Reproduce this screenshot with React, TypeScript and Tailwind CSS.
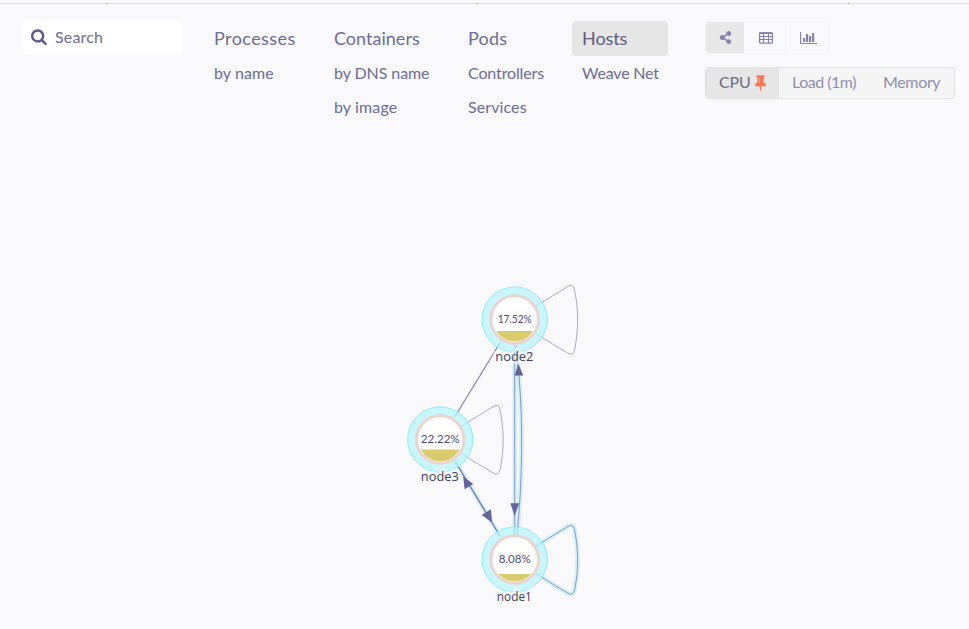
import React from "react";
import { FaShareAlt } from "react-icons/fa";

const topologies = [
  { name: "Processes", subs: [{ name: "by name", spacing: "tracking-[0.07px]" }], box: "w-[120px]", title: "tracking-[0.42px]" },
  {
    name: "Containers",
    subs: [
      { name: "by DNS name", spacing: "tracking-[-0.08px]" },
      { name: "by image", spacing: "tracking-[0.12px]" },
    ],
    box: "w-[134px]",
    title: "tracking-[0.02px]",
  },
  {
    name: "Pods",
    subs: [
      { name: "Controllers", spacing: "tracking-[-0.13px]" },
      { name: "Services", spacing: "tracking-[0.1px]" },
    ],
    box: "w-[114px]",
    title: "tracking-[0.2px]",
  },
  { name: "Hosts", subs: [{ name: "Weave Net", spacing: "tracking-[-0.2px]" }], box: "w-[96px]", title: "tracking-[-0.08px]", active: true },
];

const nodes = [
  { id: "node2", x: 514.7, y: 319.5, value: "17.52%", fill: 331, labelWidth: 38, valueWidth: 34, lit: false },
  { id: "node3", x: 440.2, y: 439.5, value: "22.22%", fill: 449.5, labelWidth: 38, valueWidth: 39, lit: false },
  { id: "node1", x: 514.7, y: 559.5, value: "8.08%", fill: 574, labelWidth: 35, valueWidth: 32, lit: true },
];

function loopPath(x: number, y: number) {
  return `M${x + 21} ${y - 13} C${x + 35} ${y - 22} ${x + 45} ${y - 28} ${x + 54} ${y - 33.5} Q${x + 58.5} ${y - 35.5} ${x + 59.5} ${y - 31} C${x + 64} ${y - 11} ${x + 64} ${y + 10} ${x + 60} ${y + 30} Q${x + 58.5} ${y + 37} ${x + 53} ${y + 33.5} C${x + 44} ${y + 28} ${x + 35} ${y + 23} ${x + 21} ${y + 14}`;
}

function SearchIcon() {
  return (
    <svg className="mb-[3px] size-[17px]" viewBox="0 0 1792 1792" fill="#5b5b8e">
      <path d="M1152 832q0-185-131.5-316.5t-316.5-131.5-316.5 131.5-131.5 316.5 131.5 316.5 316.5 131.5 316.5-131.5 131.5-316.5zm512 832q0 52-38 90t-90 38q-54 0-90-38l-343-342q-179 124-399 124-143 0-273.5-55.5t-225-150-150-225-55.5-273.5 55.5-273.5 150-225 225-150 273.5-55.5 273.5 55.5 225 150 150 225 55.5 273.5q0 220-124 399l343 343q37 37 37 90z" />
    </svg>
  );
}

function PinIcon() {
  return (
    <svg className="mb-px ml-px size-[17px]" viewBox="0 0 1792 1792" fill="#ff7550">
      <path d="M800 864v-448q0-14-9-23t-23-9-23 9-9 23v448q0 14 9 23t23 9 23-9 9-23zm672 352q0 26-19 45t-45 19h-429l-51 483q-2 12-10.500 20.500t-20.500 8.500h-1q-27 0-32-27l-76-485h-404q-26 0-45-19t-19-45q0-123 78.500-221.500t177.500-98.500v-512q-52 0-90-38t-38-90 38-90 90-38h640q52 0 90 38t38 90-38 90-90 38v512q99 0 177.500 98.500t78.500 221.500z" />
    </svg>
  );
}

function TableIcon() {
  return (
    <svg className="ml-[3px]" width="14" height="12" viewBox="0 0 14 12" fill="none" stroke="#8383ac">
      <rect x="0.6" y="0.9" width="12.8" height="10.3" rx="0.6" strokeWidth="1.2" />
      <path d="M0.5 1.2H13.5" strokeWidth="1.7" />
      <path d="M1 4.5H13M1 7.5H13M4.5 1V11M9.5 1V11" strokeWidth="1.1" />
    </svg>
  );
}

function ChartIcon() {
  return (
    <svg className="mt-[2px] ml-[2px]" width="17" height="13" viewBox="0 0 17 13" fill="#8383ac">
      <path d="M0 0H1.2V11H17V12.100H0ZM3 6H5.200V10H3ZM6 2H8.200V10H6ZM9 4H11.200V10H9ZM12 1H14.200V10H12Z" />
    </svg>
  );
}

function Graph() {
  const straight = "M455 461L500 536";
  const down = "M514.7 345V534";
  const curved = "M516 345C518 363 520.5 390 521.3 418C522.4 460 520.5 502 517 534";
  return (
    <svg className="block h-[499px] w-full" viewBox="0 130 969 499">
      <g fill="none" stroke="#b5e9f6" strokeWidth="5" opacity="0.5">
        <path d={straight} />
        <path d={down} />
        <path d={curved} />
        <path d={loopPath(514.7, 559.5)} />
      </g>
      <g fill="none" stroke="#666699">
        <path d="M500.5 342L455 416.5" strokeWidth="1.1" opacity="0.85" />
        <path d={straight} strokeWidth="1.3" opacity="0.9" />
        <path d={down} strokeWidth="1" opacity="0.65" />
        <path d={curved} strokeWidth="1" opacity="0.65" />
        {nodes.map((n) => (
          <path key={n.id} d={loopPath(n.x, n.y)} stroke={n.lit ? "#60759f" : "#79739f"} opacity={n.lit ? 0.7 : 0.6} />
        ))}
      </g>
      {nodes.map((n) => (
        <g key={n.id}>
          <circle cx={n.x} cy={n.y} r="32.6" fill="#b8f3ff" fillOpacity="0.74" stroke="#8cebfa" strokeWidth="1" />
          <circle cx={n.x} cy={n.y} r="23.8" fill="#fff" stroke="#ecd2ca" strokeWidth="2.8" />
          <clipPath id={`clip-${n.id}`}>
            <rect x={n.x - 25} y={n.fill} width="50" height="40" />
          </clipPath>
          <circle cx={n.x} cy={n.y} r="21.8" fill="#dacb6b" clipPath={`url(#clip-${n.id})`} />
          <text x={n.x} y={n.y + 3.7} textAnchor="middle" textLength={n.valueWidth} lengthAdjust="spacingAndGlyphs" className="fill-[#4c4a83] font-['Lato','Open_Sans',sans-serif] text-[11.5px]">
            {n.value}
          </text>
          <text x={n.x - 0.4} y={n.y + 41.2} textAnchor="middle" textLength={n.labelWidth} lengthAdjust="spacingAndGlyphs" className="fill-[#3e3e60] font-['Open_Sans','Noto_Sans',sans-serif] text-[13px]" stroke="#f8f8fb" strokeWidth="6" strokeOpacity="0.5" paintOrder="stroke">
            {n.id}
          </text>
        </g>
      ))}
      <g fill="#646499">
        <path d="M518.3 363.8L523.3 375.5H514.6Z" />
        <path d="M510.3 503.3H519.2L514.7 516Z" />
        <path d="M463.2 476.5L473.3 484L464.6 489.3Z" />
        <path d="M481.7 515L491 509.3L492 522.5Z" />
      </g>
    </svg>
  );
}

export default function App() {
  return (
    <div className="flex h-[629px] w-[969px] flex-col overflow-hidden bg-[#f9f9fc] font-['Lato','Open_Sans',sans-serif] text-[#6c6c98]">
      <div className="flex h-1 shrink-0 border-b border-[#dcdcdd]">
        <div className="w-[106px]" />
        <div className="mt-[3px] h-px w-px bg-[#999]" />
        <div className="w-[370px]" />
        <div className="mt-[3px] h-px w-px bg-[#999]" />
        <div className="w-[370px]" />
        <div className="mt-[3px] h-px w-px bg-[#999]" />
      </div>
      <header className="flex h-[126px] shrink-0 items-start pt-[17px] pl-[23px]">
        <div className="flex h-[33px] w-[159px] items-center rounded bg-white pl-[8px]">
          <SearchIcon />
          <span className="ml-[7px] pb-[2px] text-[16px] leading-[31px] tracking-[0.15px]">Search</span>
        </div>
        <nav className="ml-[22px] flex">
          {topologies.map((t) => (
            <div key={t.name} className={t.box}>
              <div className={`flex h-[35px] items-center rounded pb-px pl-[10px] text-[18px] ${t.title} ${t.active ? "bg-[#e6e6e6] text-[#5f5f7d]" : ""}`}>
                {t.name}
              </div>
              <div className="flex flex-col pl-[10px] text-[16px] leading-[34px] whitespace-nowrap">
                {t.subs.map((s) => (
                  <span key={s.name} className={s.spacing}>{s.name}</span>
                ))}
              </div>
            </div>
          ))}
        </nav>
        <div className="ml-[37px] flex flex-col items-start">
          <div className="flex h-[33px] w-[124px] overflow-hidden rounded border border-[#f5f5f8]">
            <div className="flex w-[38px] items-center justify-center bg-[#e8e8e8]">
              <FaShareAlt className="size-[13px] text-[#8383ac]" />
            </div>
            <div className="flex w-[42px] items-center justify-center border-r border-[#f5f5f8]"><TableIcon /></div>
            <div className="flex flex-1 items-center justify-center"><ChartIcon /></div>
          </div>
          <div className="mt-[13px] flex h-[32px] w-[250px] overflow-hidden rounded border border-[#e0e0e0] bg-[#f5f5f5] text-[16px] leading-[28px] text-[#8e8eb0]">
            <div className="flex w-[73px] items-center bg-[#e6e6e6] pl-[13px] text-[#6c6c84]">
              <span className="pb-[2px] tracking-[-0.15px]">CPU</span>
              <PinIcon />
            </div>
            <span className="w-[92px] pl-[13px] tracking-[-0.5px]">Load (1m)</span>
            <span className="pl-[12px] tracking-[-0.35px]">Memory</span>
          </div>
        </div>
      </header>
      <Graph />
    </div>
  );
}
